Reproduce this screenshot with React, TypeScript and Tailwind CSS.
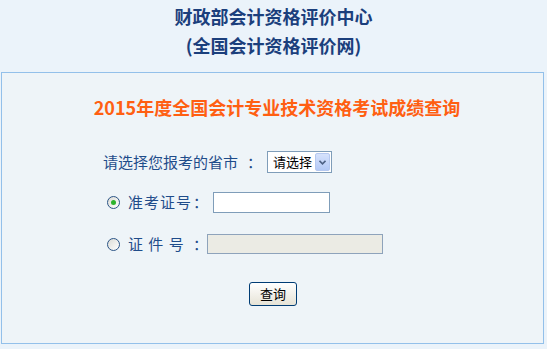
import React from "react";

const font = { fontFamily: '"Noto Sans CJK SC", "Noto Sans", sans-serif' };

function Radio({ checked }: { checked?: boolean }) {
	return (
		<span className="flex h-[13px] w-[13px] items-center justify-center rounded-full border border-[#2b5486] bg-gradient-to-br from-[#dcdcd6] to-white">
			{checked && <span className="h-[5px] w-[5px] rounded-full bg-[#2db32d]" />}
		</span>
	);
}

export default function App() {
	return (
		<div className="h-[349px] w-[547px] overflow-hidden bg-[#ebf3fa]" style={font}>
			<header className="pt-[2px] text-center text-[18px] font-bold leading-[29px] text-[#1b3f7c]">
				<div>财政部会计资格评价中心</div>
				<div>(全国会计资格评价网)</div>
			</header>

			<main className="ml-[1px] mt-[12px] h-[272px] w-[543px] border border-[#93c0ea] bg-[#eef4f8]">
				<h1 className="pl-[9px] pt-[22px] text-center text-[18px] font-bold leading-[24px] text-[#ff5f12]">
					2015年度全国会计专业技术资格考试成绩查询
				</h1>

				<div className="pl-[101px] pt-[32px] text-[15px] text-[#1f4c8a]">
					<div className="flex h-[22px] items-center">
						<span className="w-[135px]">请选择您报考的省市</span>
						<span className="w-[29px] pl-[9px]">：</span>
						<div className="flex h-[22px] w-[65px] items-center border border-[#7f9db9] bg-white">
							<span className="flex-1 pl-[5px] text-[13px] text-black">请选择</span>
							<span className="mr-[1px] flex h-[18px] w-[15px] items-center justify-center rounded-[2px] border border-[#b5c8f0] bg-gradient-to-b from-[#d6e2fc] to-[#b3c9f6]">
								<svg width="7" height="5" viewBox="0 0 7 5">
									<path d="M0.5 0.8 L3.5 3.8 L6.5 0.8" fill="none" stroke="#4d6185" strokeWidth="1.6" />
								</svg>
							</span>
						</div>
					</div>

					<div className="mt-[19px] flex h-[21px] items-center">
						<span className="ml-[4px] mr-[8px]">
							<Radio checked />
						</span>
						<span className="w-[65px] tracking-[1px]">准考证号</span>
						<span className="w-[20px]">：</span>
						<input className="h-[21px] w-[117px] border border-[#7f9db9] bg-white outline-none" />
					</div>

					<div className="mt-[21px] flex h-[20px] items-center">
						<span className="ml-[4px] mr-[8px]">
							<Radio />
						</span>
						<span className="w-[65px] tracking-[1px]">证&nbsp;件&nbsp;号</span>
						<span className="w-[14px]">：</span>
						<input
							disabled
							className="h-[20px] w-[176px] border border-[#8ea3bb] bg-[#ebebe4] outline-none"
						/>
					</div>

					<div className="mt-[28px] pl-[146px]">
						<button className="flex h-[24px] w-[48px] items-center justify-center rounded-[3px] border border-[#003c74] bg-gradient-to-b from-white to-[#e6e3d6] text-[13px] text-black">
							查询
						</button>
					</div>
				</div>
			</main>
		</div>
	);
}
